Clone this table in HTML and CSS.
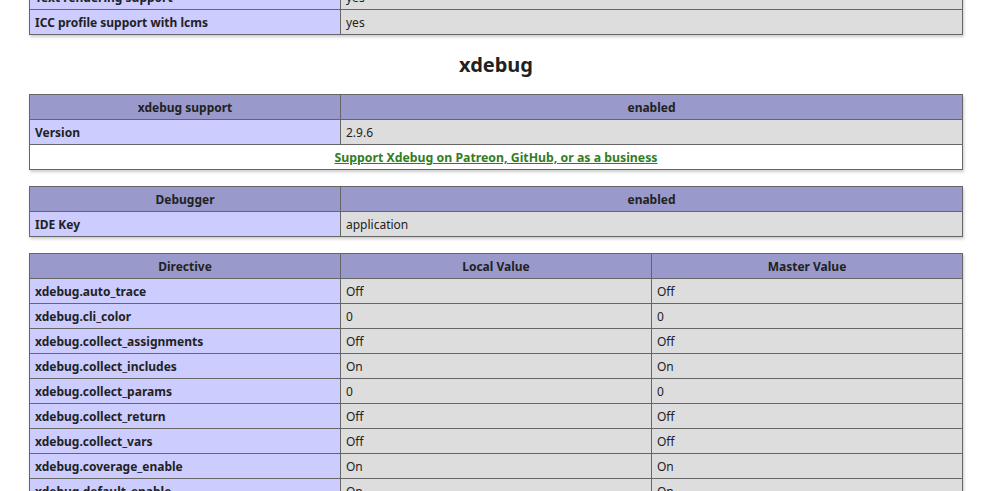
FILE: index.html
```html
<!DOCTYPE html>
<html>
<head>
<meta charset="utf-8">
<link rel="stylesheet" href="styles.css">
</head>
<body>
<div class="center">
<table class="tbl first">
<tr><td class="e">Text rendering support</td><td class="v">yes</td></tr>
<tr><td class="e">ICC profile support with lcms</td><td class="v">yes</td></tr>
</table>
<h2>xdebug</h2>
<table class="tbl">
<tr class="h"><th>xdebug support</th><th>enabled</th></tr>
<tr><td class="e">Version</td><td class="v">2.9.6</td></tr>
<tr><td colspan="2" class="link"><a href="#">Support Xdebug on Patreon, GitHub, or as a business</a></td></tr>
</table>
<table class="tbl">
<tr class="h"><th>Debugger</th><th>enabled</th></tr>
<tr><td class="e">IDE Key</td><td class="v">application</td></tr>
</table>
<table class="tbl three">
<tr class="h"><th>Directive</th><th>Local Value</th><th>Master Value</th></tr>
<tr><td class="e">xdebug.auto_trace</td><td class="v">Off</td><td class="v">Off</td></tr>
<tr><td class="e">xdebug.cli_color</td><td class="v">0</td><td class="v">0</td></tr>
<tr><td class="e">xdebug.collect_assignments</td><td class="v">Off</td><td class="v">Off</td></tr>
<tr><td class="e">xdebug.collect_includes</td><td class="v">On</td><td class="v">On</td></tr>
<tr><td class="e">xdebug.collect_params</td><td class="v">0</td><td class="v">0</td></tr>
<tr><td class="e">xdebug.collect_return</td><td class="v">Off</td><td class="v">Off</td></tr>
<tr><td class="e">xdebug.collect_vars</td><td class="v">Off</td><td class="v">Off</td></tr>
<tr><td class="e">xdebug.coverage_enable</td><td class="v">On</td><td class="v">On</td></tr>
<tr><td class="e">xdebug.default_enable</td><td class="v">On</td><td class="v">On</td></tr>
</table>
</div>
</body>
</html>
```
FILE: styles.css
```css
html, body { margin: 0; padding: 0; }
body {
  background: #fff;
  color: #222;
  font-family: "Noto Sans", "Open Sans", sans-serif;
  overflow: hidden;
}
.center {
  width: 934px;
  margin: 0 0 0 29px;
}
.tbl {
  border-collapse: collapse;
  border: 0;
  width: 934px;
  box-shadow: 1px 2px 3px #ccc;
  margin: 16px 0 16px;
  table-layout: fixed;
}
.tbl.first { margin-top: -16px; }
.tbl td, .tbl th {
  border: 1px solid #666;
  font-size: 12px;
  line-height: 15px;
  height: 15px;
  vertical-align: baseline;
  padding: 5px 5px 4px;
  text-align: left;
}
.tbl th { text-align: center; font-weight: bold; }
.h { background: #99c; }
.e { background: #ccf; width: 300px; font-weight: bold; }
.v { background: #ddd; }
.tbl th:first-child { width: 300px; }
.link { background: #fff; text-align: center !important; }
.link a {
  color: #317E1E;
  font-weight: bold;
  text-decoration: underline;
  font-size: 12.3px;
}
h2 {
  font-size: 20px;
  line-height: 27px;
  text-align: center;
  margin: 16px 0 0;
  font-weight: bold;
}
```
